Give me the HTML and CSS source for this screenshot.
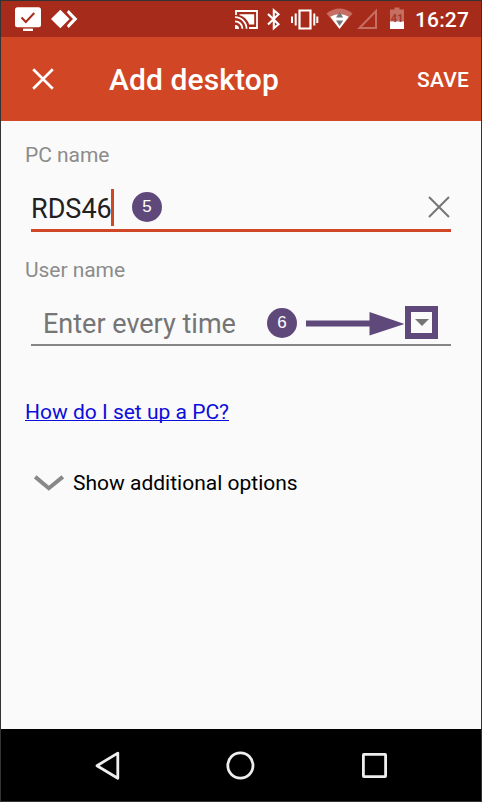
FILE: index.html
```html
<!DOCTYPE html>
<html lang="en">
<head>
<meta charset="utf-8">
<title>Add desktop</title>
<link rel="stylesheet" href="styles.css">
</head>
<body>
<div class="phone">
  <header class="status">
    <svg class="tv" width="26" height="36" viewBox="15 1 26 36"><rect x="15" y="7.3" width="26" height="20" rx="2.5" fill="#fff"/><path d="M23 29.8h10" stroke="#fff" stroke-width="2.4"/><path d="M21.5 17.5l4.3 4.5 8.5-9" fill="none" stroke="#a72b1a" stroke-width="2"/></svg>
    <svg class="diamonds" width="27" height="36" viewBox="51 1 27 36"><path d="M51 19l9.3-9.2L69.6 19l-9.3 9.2z" fill="#fff"/><path d="M66.8 12.3l1.9-2.2 8.7 8.9-8.7 8.9-1.9-2.2 3-3.5L73 19l-3.2-3.2z" fill="#fff"/></svg>
    <svg class="cast" width="24" height="36" viewBox="235 1 24 36"><path d="M239.5 14.2h14.7v10.3h-5c-1.5-4.5-5-8-9.7-9.2z" fill="#fff"/><g fill="none" stroke="#fff" stroke-width="1.8"><path d="M236 15v-4h21v17H249"/><path d="M235 17.2a11.6 11.6 0 0 1 11.6 11.6M235 21.3a7.5 7.5 0 0 1 7.5 7.5"/></g><path d="M235 25a4 4 0 0 1 4 4H235z" fill="#fff"/></svg>
    <svg class="bluetooth" width="14" height="36" viewBox="267 1 14 36"><path d="M268 14l10.5 10.3-4.7 3.9V10.2l4.7 4L268 24.5" fill="none" stroke="#fff" stroke-width="2.1"/></svg>
    <svg class="vibrate" width="28" height="36" viewBox="291 1 28 36"><path d="M299.5 10.5h11v18h-11z" fill="none" stroke="#fff" stroke-width="2.2"/><path d="M295.7 13.5v12M314.3 13.5v12M292 16.5v6.5M317.3 16.5v6.5" stroke="#fff" stroke-width="2"/></svg>
    <svg class="wifi" width="27" height="36" viewBox="326 1 27 36"><path d="M326.5 13.5Q339.5 3.5 352.5 13.5L339.5 29z" fill="#c66e62"/><path d="M330.3 16.7Q339.5 11.8 348.7 16.7L339.5 29z" fill="#fff"/><path d="M336 17.5l3.6-5.5 3.6 5.5zM336 20.5h7.2l-3.6 5.5z" fill="#777"/></svg>
    <svg class="signal" width="21" height="36" viewBox="357 1 21 36"><path d="M359.5 28L376 11v17z" fill="none" stroke="#c66e62" stroke-width="2"/></svg>
    <svg class="battery" width="14" height="36" viewBox="390 1 14 36"><path d="M390 9.5h4.5v-2h5v2h4.5V22h-14z" fill="#c66e62"/><path d="M390 21.5h14V29h-14z" fill="#fff"/><text class="level" x="397" y="22" text-anchor="middle">41</text></svg>
    <span class="time">16:27</span>
  </header>
  <div class="appbar">
    <svg class="close" width="22" height="22" viewBox="0 0 22 22"><path d="M1.2 1.2l19.6 19.6M20.8 1.2L1.2 20.8" stroke="#fff" stroke-width="2.7"/></svg>
    <h1>Add desktop</h1>
    <span class="save">SAVE</span>
  </div>
  <main>
    <div class="label">PC name</div>
    <div class="field active">
      <span class="value">RDS46</span><i class="caret"></i>
      <b class="badge">5</b>
      <svg class="clear" width="22" height="22" viewBox="0 0 22 22"><path d="M1 1l20 20M21 1L1 21" stroke="#757575" stroke-width="2"/></svg>
    </div>
    <div class="label second">User name</div>
    <div class="field choice">
      <span class="placeholder">Enter every time</span>
      <b class="badge">6</b>
      <svg class="arrow" width="100" height="26" viewBox="0 0 100 26"><path d="M1 10.5h63.5V2L99.5 14 64.5 25.5v-9H1z" fill="#5f497a"/></svg>
      <span class="drop"><svg width="14" height="7" viewBox="0 0 14 7"><path d="M0 0h14L7 7z" fill="#757575"/></svg></span>
    </div>
    <a class="help">How do I set up a PC?</a>
    <div class="more">
      <svg width="30" height="17" viewBox="0 0 30 17"><path d="M1.2 1.8l13.6 11.4L28.8 1.8" fill="none" stroke="#888" stroke-width="4"/></svg>
      <span>Show additional options</span>
    </div>
  </main>
  <nav>
    <svg width="26" height="30" viewBox="95 751 26 30"><path d="M97 765.7l20.8-12.6v25.2z" fill="none" stroke="#eee" stroke-width="2.8" stroke-linejoin="round"/></svg>
    <svg width="30" height="30" viewBox="226 751 30 30"><circle cx="240.4" cy="765.5" r="12.6" fill="none" stroke="#eee" stroke-width="2.8"/></svg>
    <svg width="26" height="30" viewBox="361 751 26 30"><rect x="363.4" y="754.4" width="22.2" height="22.2" rx=".5" fill="none" stroke="#eee" stroke-width="2.8"/></svg>
  </nav>
</div>
</body>
</html>
```
FILE: styles.css
```css
* { box-sizing: border-box; }
body { margin: 0; font-family: Roboto, sans-serif; }
svg { display: block; flex: none; }
.phone {
  width: 482px;
  height: 802px;
  border: 1px solid #333;
  background: #fafafa;
  display: flex;
  flex-direction: column;
  overflow: hidden;
}
.status { height: 36px; background: #a72b1a; display: flex; color: #fff; flex: none; }
.tv { margin-left: 14px; }
.diamonds { margin-left: 10px; }
.cast { margin-left: 157px; }
.bluetooth { margin-left: 8px; }
.vibrate { margin-left: 10px; }
.wifi { margin-left: 7px; }
.signal { margin-left: 4px; }
.battery { margin-left: 12px; }
.level { font: 700 11px Roboto, sans-serif; fill: #a33a2b; }
.time { margin-left: 11px; font-size: 21px; font-weight: 500; line-height: 38px; letter-spacing: 0.15px; }
.appbar { height: 84px; background: #d14625; color: #fff; display: flex; align-items: center; flex: none; }
.close { margin-left: 31px; }
h1 { margin: 2px 0 0 55px; font-size: 30px; font-weight: 500; line-height: 36px; letter-spacing: 0.1px; white-space: nowrap; }
.save { margin: 1px 12px 0 auto; font-size: 21px; font-weight: 500; letter-spacing: 0.2px; }
main { flex: 1; padding: 21px 30px 0 24px; }
.label { font-size: 21px; line-height: 26px; color: #8c8c8c; letter-spacing: -0.05px; }
.second { margin-top: 25px; }
.field { display: flex; align-items: center; margin-left: 6px; }
.active { height: 64px; border-bottom: 3px solid #d14625; padding-top: 17px; }
.value { font-size: 27px; line-height: 36px; color: #212121; padding-top: 3px; width: 80px; }
.caret { width: 3px; height: 37px; background: #d14625; }
.badge {
  width: 30px;
  height: 30px;
  border-radius: 50%;
  background: #5f497a;
  color: #fff;
  font: 400 17px/30px "Liberation Sans", sans-serif;
  text-align: center;
  flex: none;
}
.active .badge { margin-left: 18px; }
.clear { margin: 0 1px 0 auto; }
.choice { height: 63px; border-bottom: 2px solid #858585; padding: 18px 13px 0 12px; }
.placeholder { font-size: 27px; line-height: 36px; color: #757575; width: 224px; padding-top: 2px; white-space: nowrap; }
.arrow { margin-left: 8px; }
.drop {
  width: 33px;
  height: 33px;
  border: 6px solid #5f497a;
  display: flex;
  align-items: center;
  justify-content: center;
  flex: none;
}
.help {
  display: block;
  width: max-content;
  margin-top: 53px;
  font-size: 21px;
  line-height: 26px;
  color: #0d0ddc;
  text-decoration: underline;
  text-decoration-thickness: 1px;
  text-decoration-skip-ink: none;
}
.more { display: flex; align-items: center; margin: 45px 0 0 9px; font-size: 21px; line-height: 26px; color: #000; }
.more span { margin-left: 9px; }
nav { height: 72px; background: #000; display: flex; padding: 22px 94px 0; justify-content: space-between; flex: none; }
```
